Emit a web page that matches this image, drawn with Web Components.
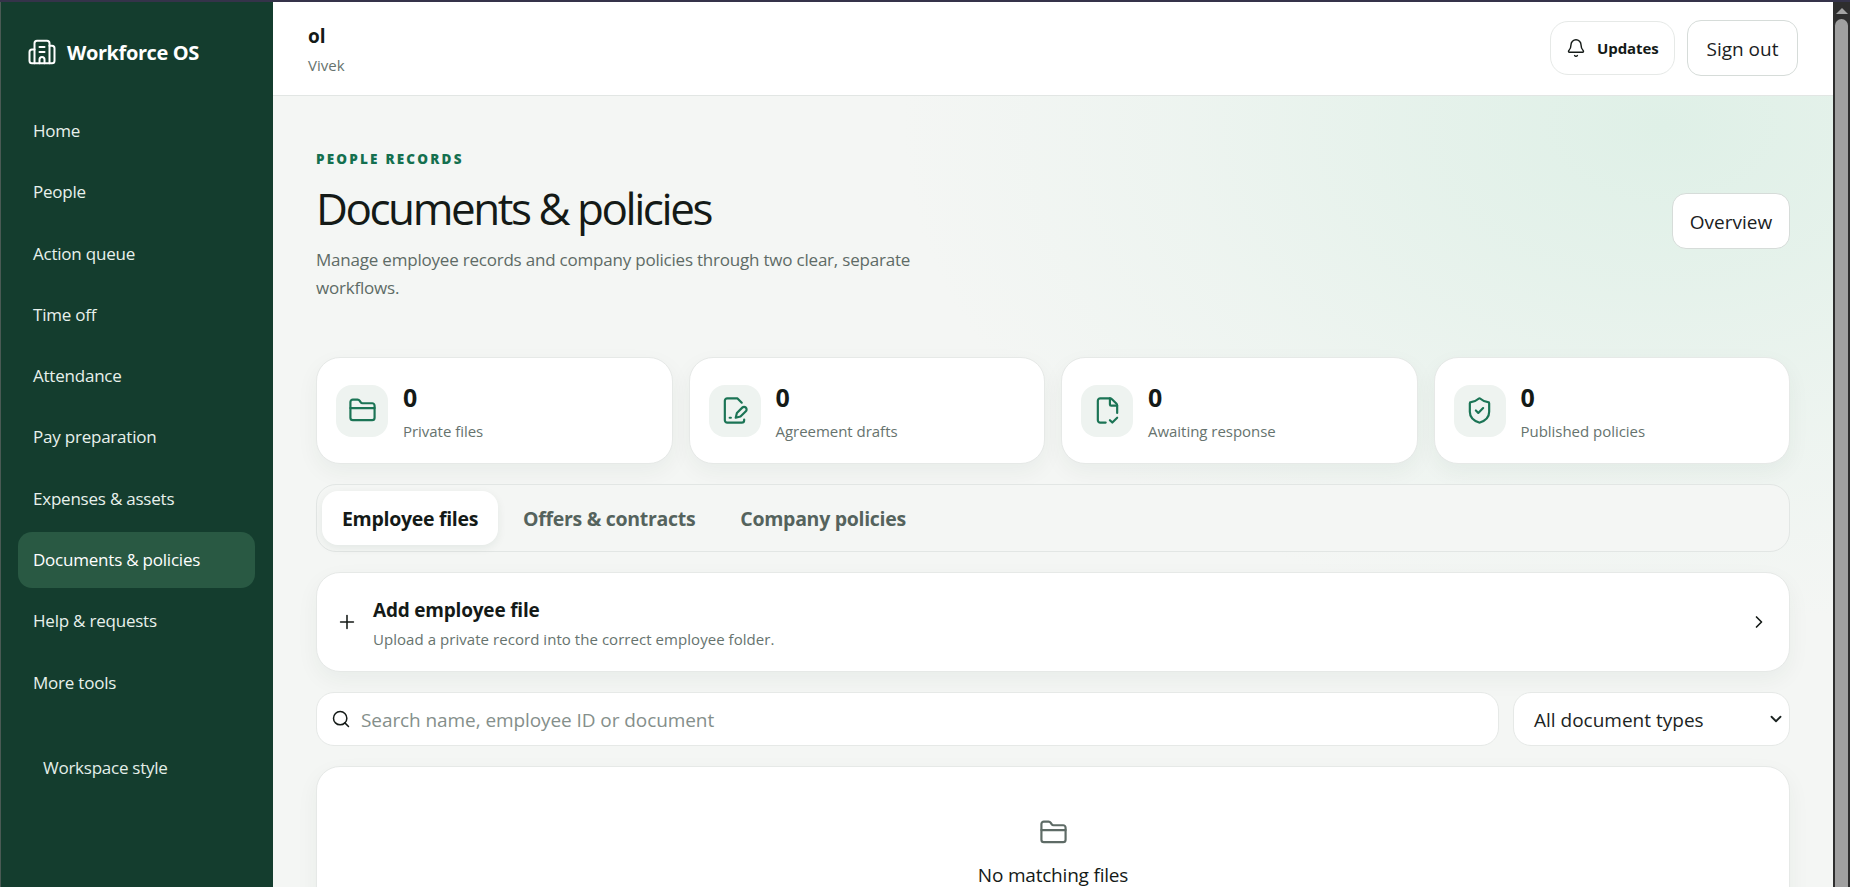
<!DOCTYPE html>
<html lang="en">
<head>
<meta charset="utf-8">
<title>Documents & policies</title>
<style>
  html, body { margin: 0; height: 100%; overflow: hidden; }
  body { font-family: "Open Sans", "Noto Sans", sans-serif; background: #f4f6f4; color: #141a17; }
  wf-app { height: 887px; }
</style>
</head>
<body>
<wf-app>
  <wf-sidebar slot="side" brand="Workforce OS">
    <wf-nav-item>Home</wf-nav-item>
    <wf-nav-item>People</wf-nav-item>
    <wf-nav-item>Action queue</wf-nav-item>
    <wf-nav-item>Time off</wf-nav-item>
    <wf-nav-item>Attendance</wf-nav-item>
    <wf-nav-item>Pay preparation</wf-nav-item>
    <wf-nav-item>Expenses &amp; assets</wf-nav-item>
    <wf-nav-item active>Documents &amp; policies</wf-nav-item>
    <wf-nav-item>Help &amp; requests</wf-nav-item>
    <wf-nav-item>More tools</wf-nav-item>
    <span slot="foot">Workspace style</span>
  </wf-sidebar>
  <wf-topbar slot="top" org="ol" user="Vivek"></wf-topbar>
  <wf-page-head eyebrow="PEOPLE RECORDS" heading="Documents &amp; policies">
    Manage employee records and company policies through two clear, separate workflows.
  </wf-page-head>
  <wf-stats>
    <wf-stat icon="folder" value="0" label="Private files"></wf-stat>
    <wf-stat icon="pen" value="0" label="Agreement drafts"></wf-stat>
    <wf-stat icon="check" value="0" label="Awaiting response"></wf-stat>
    <wf-stat icon="shield" value="0" label="Published policies"></wf-stat>
  </wf-stats>
  <wf-tabs>
    <wf-tab active>Employee files</wf-tab>
    <wf-tab>Offers &amp; contracts</wf-tab>
    <wf-tab>Company policies</wf-tab>
  </wf-tabs>
  <wf-action-card heading="Add employee file" text="Upload a private record into the correct employee folder."></wf-action-card>
  <wf-filters placeholder="Search name, employee ID or document" value="All document types"></wf-filters>
  <wf-empty>No matching files</wf-empty>
</wf-app>

<script>
const ICONS = {
  building: '<path d="M10 12h4"/><path d="M10 8h4"/><path d="M14 21v-3a2 2 0 0 0-4 0v3"/><path d="M6 10H4a2 2 0 0 0-2 2v7a2 2 0 0 0 2 2h16a2 2 0 0 0 2-2V9a2 2 0 0 0-2-2h-2"/><path d="M6 21V5a2 2 0 0 1 2-2h8a2 2 0 0 1 2 2v16"/>',
  folder: '<path d="M2 10h20"/><path d="M4 20h16a2 2 0 0 0 2-2V8a2 2 0 0 0-2-2h-7.9a2 2 0 0 1-1.69-.9L9.6 3.9A2 2 0 0 0 7.93 3H4a2 2 0 0 0-2 2v13a2 2 0 0 0 2 2Z"/>',
  pen: '<path d="M20 19.5v.5a2 2 0 0 1-2 2H6a2 2 0 0 1-2-2V4a2 2 0 0 1 2-2h8.5L18 5.5"/><path d="M8 18h1"/><path d="M18.42 9.61a2.1 2.1 0 1 1 2.97 2.97L16.95 17 13 18l.99-3.95 4.43-4.44Z"/>',
  check: '<path d="M10.5 22H6a2 2 0 0 1-2-2V4a2 2 0 0 1 2-2h8a2.4 2.4 0 0 1 1.706.706l3.588 3.588A2.4 2.4 0 0 1 20 8v6"/><path d="M14 2v5a1 1 0 0 0 1 1h5"/><path d="m14 20 2 2 4-4"/>',
  shield: '<path d="M20 13c0 5-3.5 7.5-7.66 8.95a1 1 0 0 1-.67-.01C7.5 20.5 4 18 4 13V6a1 1 0 0 1 1-1c2 0 4.5-1.2 6.24-2.72a1.17 1.17 0 0 1 1.52 0C14.51 3.81 17 5 19 5a1 1 0 0 1 1 1z"/><path d="m9 12 2 2 4-4"/>',
  bell: '<path d="M10.268 21a2 2 0 0 0 3.464 0"/><path d="M3.262 15.326A1 1 0 0 0 4 17h16a1 1 0 0 0 .74-1.673C19.41 13.956 18 12.499 18 8A6 6 0 0 0 6 8c0 4.499-1.411 5.956-2.738 7.326"/>',
  plus: '<path d="M5 12h14"/><path d="M12 5v14"/>',
  right: '<path d="m9 18 6-6-6-6"/>',
  down: '<path d="m6 9 6 6 6-6"/>',
  search: '<path d="m21 21-4.34-4.34"/><circle cx="11" cy="11" r="8"/>'
};
const svg = (name, size, stroke = 2) =>
  `<svg width="${size}" height="${size}" viewBox="0 0 24 24" fill="none" stroke="currentColor" stroke-width="${stroke}" stroke-linecap="round" stroke-linejoin="round" style="display:block;flex:none">${ICONS[name]}</svg>`;

// Small helper so every element below is only a template and a class.
function component(tag, render) {
  customElements.define(tag, class extends HTMLElement {
    constructor() {
      super();
      this.attachShadow({ mode: 'open' });
    }
    connectedCallback() {
      this.shadowRoot.innerHTML = render(this);
    }
  });
}

component('wf-app', () => `
  <style>
    :host { display: flex; height: 887px; background: #35334a; padding-top: 2px; box-sizing: border-box; overflow: hidden; }
    .edge { width: 1px; background: #4a5a54; flex: none; }
    .scroll { width: 17px; flex: none; background: #2e2e2e; display: flex; flex-direction: column; align-items: center; }
    .arrow { width: 0; height: 0; margin-top: 6px; border: 6px solid transparent; border-top: 0; border-bottom: 6px solid #a3a3a3; }
    .thumb { width: 13px; flex: 1; margin: 5px 0 0; background: #a0a0a0; border-radius: 7px 7px 0 0; }
    .col { width: 1560px; flex: none; display: flex; flex-direction: column; min-height: 0; }
    .content { flex: 1; min-height: 0; overflow: hidden; padding: 47px 43px 0; display: flex; flex-direction: column;
      background:
        radial-gradient(ellipse 760px 500px at 1390px 30px, #dff0e7 0%, rgba(223,240,231,.72) 30%, rgba(223,240,231,.3) 65%, rgba(223,240,231,0) 100%),
        #f4f6f4; }
  </style>
  <div class="edge"></div>
  <slot name="side"></slot>
  <div class="col">
    <slot name="top"></slot>
    <div class="content"><slot></slot></div>
  </div>
  <div class="scroll"><div class="arrow"></div><div class="thumb"></div></div>
`);

component('wf-sidebar', el => `
  <style>
    :host { display: flex; flex-direction: column; width: 272px; flex: none; background: #143d2e; color: #eef5f1; box-sizing: border-box; padding: 0 18px 0 17px; }
    .brand { display: flex; align-items: center; gap: 10px; height: 100px; padding-left: 9px; color: #fff; font-size: 20px; font-weight: 700; letter-spacing: -.4px; }
    nav { display: flex; flex-direction: column; gap: 5.3px; margin-top: .5px; }
    .foot { margin-top: 46px; padding-left: 25px; font-size: 17px; letter-spacing: -.25px; color: #e4efe9; }
  </style>
  <div class="brand">${svg('building', 30, 1.6)}<span>${el.getAttribute('brand')}</span></div>
  <nav><slot></slot></nav>
  <div class="foot"><slot name="foot"></slot></div>
`);

component('wf-nav-item', el => `
  <style>
    :host { display: flex; align-items: center; height: 56px; padding-left: 15px; border-radius: 14px; font-size: 17px; letter-spacing: -.22px; color: #e8f1ec; }
    :host([active]) { background: #295943; color: #fff; }
  </style>
  <slot></slot>
`);

component('wf-button', el => `
  <style>
    :host { display: inline-flex; align-items: center; justify-content: center; box-sizing: border-box; height: 56px; padding: 2px 16px 0; background: #fff; border: 1px solid #d6dcd9; border-radius: 14px; font-size: 19px; color: #1a211e; flex: none; }
  </style>
  <slot></slot>
`);

component('wf-topbar', el => `
  <style>
    :host { display: flex; align-items: center; justify-content: space-between; height: 94px; flex: none; box-sizing: border-box; background: #fff; border-bottom: 1px solid #e2e6e4; padding: 0 35px 0 35px; }
    .who b { display: block; font-size: 19px; font-weight: 700; line-height: 26px; color: #141a17; }
    .who span { display: block; font-size: 15px; line-height: 20px; margin-top: 6px; color: #66736e; }
    .acts { display: flex; align-items: center; gap: 12px; margin-top: -1px; }
    .upd { display: flex; align-items: center; gap: 11px; box-sizing: border-box; height: 54px; width: 125px; padding-left: 15px; border: 1px solid #e6e9e7; border-radius: 18px; font-size: 15px; font-weight: 700; letter-spacing: -.1px; color: #141a17; }
  </style>
  <div class="who"><b>${el.getAttribute('org')}</b><span>${el.getAttribute('user')}</span></div>
  <div class="acts">
    <div class="upd">${svg('bell', 20, 1.7)}<span>Updates</span></div>
    <wf-button style="width:111px">Sign out</wf-button>
  </div>
`);

component('wf-page-head', el => `
  <style>
    :host { display: flex; justify-content: space-between; align-items: flex-start; height: 214px; flex: none; box-sizing: border-box; }
    .eye { font-size: 13.5px; font-weight: 800; letter-spacing: 2.2px; line-height: 20px; color: #14704f; margin-top: 6px; }
    h1 { margin: 11px 0 0; font-size: 44px; line-height: 56px; font-weight: 400; letter-spacing: -2.45px; color: #141a17; }
    p { margin: 10px 0 0; width: 620px; font-size: 17px; line-height: 28px; letter-spacing: -.21px; color: #5e6b66; }
    wf-button { margin-top: 50px; width: 118px; }
  </style>
  <div>
    <div class="eye">${el.getAttribute('eyebrow')}</div>
    <h1>${el.getAttribute('heading')}</h1>
    <p><slot></slot></p>
  </div>
  <wf-button>Overview</wf-button>
`);

component('wf-stats', () => `
  <style>
    :host { display: grid; grid-template-columns: repeat(4, 1fr); gap: 16px; flex: none; }
  </style>
  <slot></slot>
`);

component('wf-stat', el => `
  <style>
    :host { display: flex; align-items: center; gap: 15px; box-sizing: border-box; height: 107px; padding: 0 19px; background: #fff; border: 1px solid #e6e9e7; border-radius: 24px; box-shadow: 0 8px 22px rgba(20,50,40,.05); }
    .ico { width: 52px; height: 52px; flex: none; border-radius: 16px; background: #eef3f0; color: #1b7455; display: flex; align-items: center; justify-content: center; }
    .txt { padding-top: 2px; }
    b { display: block; font-size: 25px; line-height: 30px; font-weight: 700; color: #141a17; }
    span { display: block; font-size: 15px; line-height: 20px; margin-top: 9px; letter-spacing: -.03px; color: #66736e; }
  </style>
  <div class="ico">${svg(el.getAttribute('icon'), 29, 1.8)}</div>
  <div class="txt"><b>${el.getAttribute('value')}</b><span>${el.getAttribute('label')}</span></div>
`);

component('wf-tabs', () => `
  <style>
    :host { display: flex; align-items: center; gap: 5px; box-sizing: border-box; flex: none; height: 68px; margin-top: 20px; padding: 0 5px; background: #f4f6f4; border: 1px solid #e2e6e4; border-radius: 20px; }
  </style>
  <slot></slot>
`);

component('wf-tab', el => `
  <style>
    :host { display: flex; align-items: center; height: 54px; padding: 1px 20px 0; box-sizing: border-box; border-radius: 16px; font-size: 19.5px; font-weight: 700; letter-spacing: -.3px; color: #55635d; }
    :host([active]) { background: #fff; color: #141a17; box-shadow: 0 3px 10px rgba(20,50,40,.07); }
  </style>
  <slot></slot>
`);

component('wf-action-card', el => `
  <style>
    :host { display: flex; align-items: center; box-sizing: border-box; flex: none; height: 100px; margin-top: 20px; padding: 0 20px 0 19px; background: #fff; border: 1px solid #e6e9e7; border-radius: 24px; box-shadow: 0 8px 22px rgba(20,50,40,.05); color: #141a17; }
    .txt { flex: 1; margin-left: 15px; padding-top: 2px; }
    b { display: block; font-size: 19px; line-height: 26px; font-weight: 700; letter-spacing: -.2px; }
    span { display: block; font-size: 15px; line-height: 20px; margin-top: 6px; letter-spacing: .05px; color: #66736e; }
  </style>
  ${svg('plus', 22, 1.7)}
  <div class="txt"><b>${el.getAttribute('heading')}</b><span>${el.getAttribute('text')}</span></div>
  ${svg('right', 20, 2)}
`);

component('wf-filters', el => `
  <style>
    :host { display: flex; gap: 14px; flex: none; margin-top: 20px; }
    .box { display: flex; align-items: center; box-sizing: border-box; height: 54px; background: #fff; border: 1px solid #e6e9e7; border-radius: 18px; font-size: 19px; }
    .box span { padding-top: 2px; }
    .search { flex: 1; padding-left: 14px; gap: 10px; color: #141a17; }
    .search span { color: #858f8b; letter-spacing: -.08px; }
    .select { width: 277px; flex: none; padding: 0 4px 0 20px; justify-content: space-between; color: #1c2422; }
  </style>
  <div class="box search">${svg('search', 20, 1.8)}<span>${el.getAttribute('placeholder')}</span></div>
  <div class="box select"><span>${el.getAttribute('value')}</span>${svg('down', 18, 2.4)}</div>
`);

component('wf-empty', () => `
  <style>
    :host { display: flex; flex-direction: column; align-items: center; box-sizing: border-box; flex: none; height: 300px; margin-top: 20px; padding-top: 51px; background: #fff; border: 1px solid #e6e9e7; border-radius: 24px; box-shadow: 0 8px 22px rgba(20,50,40,.05); color: #5e6b66; }
    p { margin: 16px 0 0; font-size: 19px; line-height: 24px; letter-spacing: -.2px; color: #141a17; }
  </style>
  ${svg('folder', 29, 1.8)}
  <p><slot></slot></p>
`);
</script>
</body>
</html>
